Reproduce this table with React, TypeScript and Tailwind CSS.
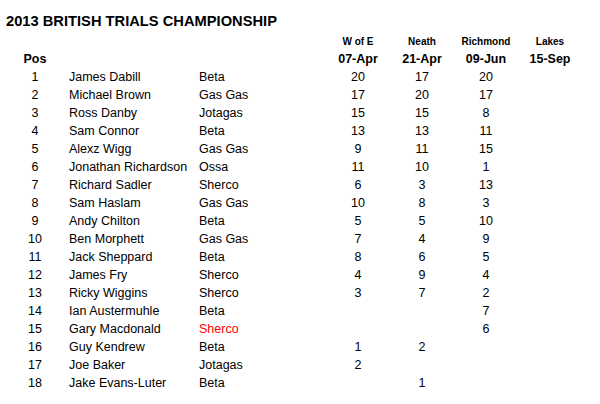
const rows: [number, string, string, string, string, string][] = [
  [1, "James Dabill", "Beta", "20", "17", "20"],
  [2, "Michael Brown", "Gas Gas", "17", "20", "17"],
  [3, "Ross Danby", "Jotagas", "15", "15", "8"],
  [4, "Sam Connor", "Beta", "13", "13", "11"],
  [5, "Alexz Wigg", "Gas Gas", "9", "11", "15"],
  [6, "Jonathan Richardson", "Ossa", "11", "10", "1"],
  [7, "Richard Sadler", "Sherco", "6", "3", "13"],
  [8, "Sam Haslam", "Gas Gas", "10", "8", "3"],
  [9, "Andy Chilton", "Beta", "5", "5", "10"],
  [10, "Ben Morphett", "Gas Gas", "7", "4", "9"],
  [11, "Jack Sheppard", "Beta", "8", "6", "5"],
  [12, "James Fry", "Sherco", "4", "9", "4"],
  [13, "Ricky Wiggins", "Sherco", "3", "7", "2"],
  [14, "Ian Austermuhle", "Beta", "", "", "7"],
  [15, "Gary Macdonald", "Sherco", "", "", "6"],
  [16, "Guy Kendrew", "Beta", "1", "2", ""],
  [17, "Joe Baker", "Jotagas", "2", "", ""],
  [18, "Jake Evans-Luter", "Beta", "", "1", ""],
];

const grid = "grid grid-cols-[40px_144px_127px_64px_64px_64px_64px] h-[18px] items-center";

export default function App() {
  return (
    <div className="w-[600px] h-[404px] bg-white text-black font-['Liberation_Sans',Arial,sans-serif] overflow-hidden">
      <h1 className="pl-[6px] pt-[11px] h-[32px] text-[14.7px] leading-[20px] font-bold">
        2013 BRITISH TRIALS CHAMPIONSHIP
      </h1>
      <div className="pl-[15px]">
        <div className={`${grid} text-[10px] font-bold`}>
          <div />
          <div />
          <div />
          <div className="text-center">W of E</div>
          <div className="text-center">Neath</div>
          <div className="text-center">Richmond</div>
          <div className="text-center">Lakes</div>
        </div>
        <div className={`${grid} text-[12.5px] font-bold`}>
          <div className="text-center">Pos</div>
          <div />
          <div />
          <div className="text-center">07-Apr</div>
          <div className="text-center">21-Apr</div>
          <div className="text-center">09-Jun</div>
          <div className="text-center">15-Sep</div>
        </div>
        {rows.map(([pos, name, make, a, b, c]) => (
          <div key={pos} className={`${grid} text-[12.5px]`}>
            <div className="text-center">{pos}</div>
            <div className="pl-[14px] whitespace-nowrap">{name}</div>
            <div className={pos === 15 ? "text-[#ff0000]" : ""}>{make}</div>
            <div className="text-center">{a}</div>
            <div className="text-center">{b}</div>
            <div className="text-center">{c}</div>
            <div />
          </div>
        ))}
      </div>
    </div>
  );
}
